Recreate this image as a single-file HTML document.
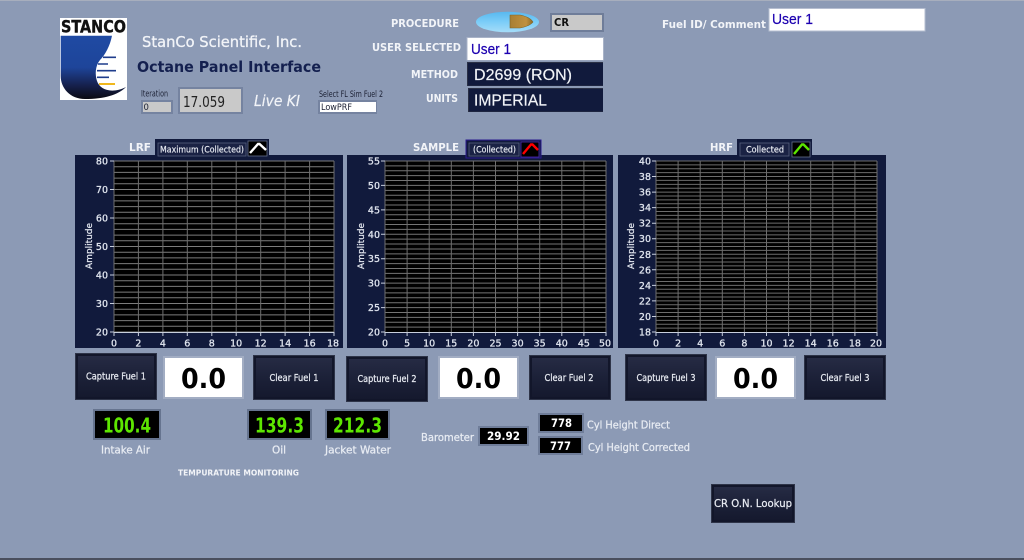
<!DOCTYPE html>
<html><head><meta charset="utf-8"><style>
html,body{margin:0;padding:0;width:1024px;height:560px;overflow:hidden;background:#8c9ab5}
svg{display:block;position:absolute;left:0;top:0}
text{font-family:"Liberation Sans",sans-serif}
.d{font-family:"DejaVu Sans",sans-serif}
.lb{font-family:"DejaVu Sans",sans-serif;font-weight:bold;font-size:10.5px;fill:#f2f4f8}
.t{font-family:"DejaVu Sans",sans-serif;font-size:10.5px;fill:#e8ecf3;stroke:#e8ecf3;stroke-width:.25}
.ax{font-family:"DejaVu Sans",sans-serif;font-size:9.5px;fill:#dfe4ee;stroke:#dfe4ee;stroke-width:.3}
.am{font-family:"DejaVu Sans",sans-serif;font-size:9px;fill:#e6eaf2;stroke:#e6eaf2;stroke-width:.2}
.btn{font-family:"DejaVu Sans",sans-serif;font-size:9.5px;fill:#e8ebf2;stroke:#e8ebf2;stroke-width:.25;text-anchor:middle}
.leg{font-family:"DejaVu Sans",sans-serif;font-size:9px;fill:#e8ebf2;stroke:#e8ebf2;stroke-width:.2}
.big{font-family:"DejaVu Sans",sans-serif;font-weight:bold;font-size:28px;fill:#000;text-anchor:middle}
.grn{font-family:"DejaVu Sans",sans-serif;font-weight:bold;font-size:20px;fill:#5de600}
.wh{font-family:"DejaVu Sans",sans-serif;font-weight:bold;font-size:11.5px;fill:#fff}
.usr{font-size:14.5px;fill:#1c00b0;stroke:#1c00b0;stroke-width:.2}
.drk{font-size:16px;fill:#f2f4f8;stroke:#f2f4f8;stroke-width:.2}
.sm{font-family:"DejaVu Sans",sans-serif;font-size:8.5px;fill:#1b2033}
</style></head><body>
<svg width="1024" height="560" viewBox="0 0 1024 560" xmlns="http://www.w3.org/2000/svg">
<defs>
<linearGradient id="bg" x1="0" y1="0" x2="0" y2="1"><stop offset="0" stop-color="#262b44"/><stop offset=".5" stop-color="#1c2138"/><stop offset="1" stop-color="#15192e"/></linearGradient>
<linearGradient id="lg" x1="0" y1="0" x2="0" y2="1"><stop offset="0" stop-color="#1f4aa3"/><stop offset=".5" stop-color="#1e459a"/><stop offset=".78" stop-color="#16214e"/><stop offset="1" stop-color="#0a0a12"/></linearGradient>
<linearGradient id="tg" x1="0" y1="0" x2="0" y2="1"><stop offset="0" stop-color="#58b8ef"/><stop offset=".5" stop-color="#7ccdf8"/><stop offset="1" stop-color="#a5dcf8"/></linearGradient>
<linearGradient id="bl" x1="0" y1="0" x2="1" y2="0"><stop offset="0" stop-color="#a87f32"/><stop offset=".7" stop-color="#c0913e"/><stop offset="1" stop-color="#8c6a28"/></linearGradient>
</defs>
<rect width="1024" height="560" fill="#8c9ab5"/>
<rect width="1024" height="1" fill="#a7aebd"/>
<rect y="558" width="1024" height="2" fill="#4a4f5e"/>

<!-- logo -->
<rect x="60" y="18" width="67" height="82" fill="#fff"/>
<text x="61" y="32.500" textLength="65" lengthAdjust="spacingAndGlyphs" style="font-weight:bold;font-size:16.5px;font-family:'DejaVu Sans',sans-serif;stroke:#111;stroke-width:.4" fill="#111">STANCO</text>
<path d="M60.700 35.700H112C110 46 105 55 100 60C95 66 95 75 97 81C100 90 112 94 126 87C118 95 104 99 85 99C70 99 60.700 88 60.700 76Z" fill="url(#lg)"/>
<path d="M103 57.300H116M98 64H108M97 70.700H116M97 77.300H109" stroke="#1f3d8c" stroke-width="1.6"/>
<path d="M99 84H115" stroke="#f0b81e" stroke-width="2"/>

<text x="142" y="47" textLength="160" lengthAdjust="spacingAndGlyphs" style="font-size:15px;stroke:#f2f4f8;stroke-width:.3" class="d" fill="#f2f4f8">StanCo Scientific, Inc.</text>
<text x="137" y="72" textLength="184" lengthAdjust="spacingAndGlyphs" style="font-size:15px;font-weight:bold" class="d" fill="#14204f">Octane Panel Interface</text>

<text x="141" y="96.500" textLength="27" lengthAdjust="spacingAndGlyphs" class="sm">Iteration</text>
<rect x="141" y="100" width="32" height="14" fill="#7583a0"/><rect x="143" y="102" width="28" height="10" fill="#c9c9c9"/>
<text x="143.500" y="110" class="sm" fill="#333">0</text>
<rect x="178" y="87" width="65" height="27" fill="#7583a0"/><rect x="180" y="89" width="61" height="23" fill="#c9c9c9"/>
<text x="183" y="107" textLength="42" lengthAdjust="spacingAndGlyphs" style="font-size:15px" class="d" fill="#222">17.059</text>
<text x="254" y="106" textLength="46" lengthAdjust="spacingAndGlyphs" style="font-size:15px;font-style:italic;stroke:#f2f4f8;stroke-width:.2" class="d" fill="#f2f4f8">Live KI</text>
<text x="319" y="97" textLength="64" lengthAdjust="spacingAndGlyphs" class="sm">Select FL Sim Fuel 2</text>
<rect x="318" y="100" width="59" height="14" fill="#7583a0"/><rect x="320" y="102" width="56" height="10" fill="#fff"/>
<text x="321" y="110" textLength="31" lengthAdjust="spacingAndGlyphs" class="sm" fill="#222">LowPRF</text>

<!-- procedure -->
<text x="391" y="27" textLength="68" lengthAdjust="spacingAndGlyphs" class="lb">PROCEDURE</text>
<ellipse cx="507.500" cy="22" rx="31.500" ry="10.300" fill="url(#tg)"/>
<path d="M510 15H520Q530 17 533 22Q530 26 520 28H510Z" fill="url(#bl)" stroke="#7d6428" stroke-width=".6"/>
<rect x="550" y="13" width="54" height="19" fill="#6f7d99"/><rect x="552" y="15" width="50" height="15" fill="#c9c9c9"/>
<text x="554" y="26" textLength="15" lengthAdjust="spacingAndGlyphs" class="d" style="font-weight:bold;font-size:10.5px" fill="#111">CR</text>

<text x="372" y="51" textLength="89" lengthAdjust="spacingAndGlyphs" class="lb">USER SELECTED</text>
<rect x="466.500" y="37" width="137.500" height="23.500" fill="#a9b3c8"/><rect x="467.500" y="38" width="135.500" height="22" fill="#fff"/>
<text x="471" y="54" textLength="40" lengthAdjust="spacingAndGlyphs" class="usr">User 1</text>

<text x="411" y="78" textLength="47" lengthAdjust="spacingAndGlyphs" class="lb">METHOD</text>
<rect x="467" y="62" width="136" height="24" fill="#2a3045"/><rect x="468" y="63" width="135" height="22.500" fill="#111a3c"/>
<text x="474" y="80" textLength="98" lengthAdjust="spacingAndGlyphs" class="drk">D2699 (RON)</text>

<text x="426" y="102" textLength="32" lengthAdjust="spacingAndGlyphs" class="lb">UNITS</text>
<rect x="468" y="88" width="135" height="24" fill="#2a3045"/><rect x="469" y="89" width="134" height="22.500" fill="#111a3c"/>
<text x="474" y="105.500" textLength="73" lengthAdjust="spacingAndGlyphs" class="drk">IMPERIAL</text>

<text x="662" y="28" textLength="104" lengthAdjust="spacingAndGlyphs" class="lb">Fuel ID/ Comment</text>
<rect x="768.500" y="8" width="157" height="23.500" fill="#b5bdd0"/><rect x="769.500" y="9" width="155" height="21.500" fill="#fff"/>
<text x="772" y="24" textLength="41" lengthAdjust="spacingAndGlyphs" class="usr">User 1</text>

<!-- chart 1 -->
<rect x="75" y="155" width="268" height="193" fill="#111a3c"/>
<rect x="114" y="161" width="220" height="171" fill="#000"/>
<path fill="none" stroke="#7c7c7c" stroke-width="1" d="M114 161h220m-220 5.7h220m-220 5.7h220m-220 5.7h220m-220 5.7h220m-220 5.7h220m-220 5.7h220m-220 5.7h220m-220 5.7h220m-220 5.7h220m-220 5.7h220m-220 5.7h220m-220 5.7h220m-220 5.7h220m-220 5.7h220m-220 5.7h220m-220 5.7h220m-220 5.7h220m-220 5.7h220m-220 5.7h220m-220 5.7h220m-220 5.7h220m-220 5.7h220m-220 5.7h220m-220 5.7h220m-220 5.7h220m-220 5.7h220m-220 5.7h220m-220 5.7h220m-220 5.7h220m-220 5.7h220"/>
<path fill="none" stroke="#6e6e6e" stroke-width="1" d="M114 161v171M138.400 161v171M162.900 161v171M187.300 161v171M211.800 161v171M236.200 161v171M260.700 161v171M285.100 161v171M309.600 161v171M334 161v171"/>
<path fill="none" stroke="#c8cfdd" stroke-width="1" d="M114 332.500H334M110 161H114M110 189.500H114M110 218H114M110 246.500H114M110 275H114M110 303.500H114M110 332H114M114 332v4M138.400 332v4M162.900 332v4M187.300 332v4M211.800 332v4M236.200 332v4M260.700 332v4M285.100 332v4M309.600 332v4M334 332v4"/>
<g text-anchor="end"><text x="108" y="164.500" class="ax">80</text><text x="108" y="193" class="ax">70</text><text x="108" y="221.500" class="ax">60</text><text x="108" y="250" class="ax">50</text><text x="108" y="278.500" class="ax">40</text><text x="108" y="307" class="ax">30</text><text x="108" y="335.500" class="ax">20</text></g>
<g text-anchor="middle"><text x="114" y="346.500" class="ax">0</text><text x="138.400" y="346.500" class="ax">2</text><text x="162.900" y="346.500" class="ax">4</text><text x="187.300" y="346.500" class="ax">6</text><text x="211.800" y="346.500" class="ax">8</text><text x="236.200" y="346.500" class="ax">10</text><text x="260.700" y="346.500" class="ax">12</text><text x="285.100" y="346.500" class="ax">14</text><text x="309.600" y="346.500" class="ax">16</text><text x="333" y="346.500" class="ax">18</text></g>
<text transform="translate(92 246) rotate(-90)" text-anchor="middle" class="am">Amplitude</text>
<text x="129" y="151" textLength="22" lengthAdjust="spacingAndGlyphs" class="lb">LRF</text>
<rect x="155" y="139" width="114" height="18" fill="#111a3c"/>
<rect x="158" y="143" width="88" height="13" fill="#1a2244" stroke="#55607e" stroke-width=".8"/>
<text x="160" y="152.500" textLength="84" lengthAdjust="spacingAndGlyphs" class="leg">Maximum (Collected)</text>
<rect x="248" y="141" width="19" height="15" fill="#000" stroke="#66708a" stroke-width=".8"/>
<path d="M250 153L258 144H259.500L266 150" fill="none" stroke="#fff" stroke-width="2.400"/>

<!-- chart 2 -->
<rect x="347" y="155" width="266" height="193" fill="#111a3c"/>
<rect x="385" y="161" width="221" height="171" fill="#000"/>
<path fill="none" stroke="#747474" stroke-width="1" d="M385 161h221m-221 4.886h221m-221 4.886h221m-221 4.886h221m-221 4.886h221m-221 4.886h221m-221 4.886h221m-221 4.886h221m-221 4.886h221m-221 4.886h221m-221 4.886h221m-221 4.886h221m-221 4.886h221m-221 4.886h221m-221 4.886h221m-221 4.886h221m-221 4.886h221m-221 4.886h221m-221 4.886h221m-221 4.886h221m-221 4.886h221m-221 4.886h221m-221 4.886h221m-221 4.886h221m-221 4.886h221m-221 4.886h221m-221 4.886h221m-221 4.886h221m-221 4.886h221m-221 4.886h221m-221 4.886h221m-221 4.886h221m-221 4.886h221m-221 4.886h221m-221 4.886h221"/>
<path fill="none" stroke="#6e6e6e" stroke-width="1" d="M385 161v171M407.100 161v171M429.200 161v171M451.300 161v171M473.400 161v171M495.500 161v171M517.600 161v171M539.700 161v171M561.800 161v171M583.900 161v171M606 161v171"/>
<path fill="none" stroke="#c8cfdd" stroke-width="1" d="M385 332.500H606M381 161H385M381 185.400H385M381 209.900H385M381 234.300H385M381 258.700H385M381 283.100H385M381 307.600H385M381 332H385M385 332v4M407.100 332v4M429.200 332v4M451.300 332v4M473.400 332v4M495.500 332v4M517.600 332v4M539.700 332v4M561.800 332v4M583.900 332v4M606 332v4"/>
<g text-anchor="end"><text x="380" y="164.500" class="ax">55</text><text x="380" y="189" class="ax">50</text><text x="380" y="213.400" class="ax">45</text><text x="380" y="237.800" class="ax">40</text><text x="380" y="262.200" class="ax">35</text><text x="380" y="286.600" class="ax">30</text><text x="380" y="311.100" class="ax">25</text><text x="380" y="335.500" class="ax">20</text></g>
<g text-anchor="middle"><text x="385" y="346.500" class="ax">0</text><text x="407.100" y="346.500" class="ax">5</text><text x="429.200" y="346.500" class="ax">10</text><text x="451.300" y="346.500" class="ax">15</text><text x="473.400" y="346.500" class="ax">20</text><text x="495.500" y="346.500" class="ax">25</text><text x="517.600" y="346.500" class="ax">30</text><text x="539.700" y="346.500" class="ax">35</text><text x="561.800" y="346.500" class="ax">40</text><text x="583.900" y="346.500" class="ax">45</text><text x="605" y="346.500" class="ax">50</text></g>
<text transform="translate(364 246) rotate(-90)" text-anchor="middle" class="am">Amplitude</text>
<text x="413" y="151" textLength="46" lengthAdjust="spacingAndGlyphs" class="lb">SAMPLE</text>
<rect x="466" y="140" width="75" height="18" fill="#111a3c" stroke="#2a1a90" stroke-width="1"/>
<rect x="469" y="143" width="50" height="13" fill="#1a2244" stroke="#55607e" stroke-width=".8"/>
<text x="473" y="152.500" textLength="43" lengthAdjust="spacingAndGlyphs" class="leg">(Collected)</text>
<rect x="521" y="142" width="18" height="15" fill="#000" stroke="#4a2ab0" stroke-width=".8"/>
<path d="M523 154L531 144.500H532.500L538 150" fill="none" stroke="#f00" stroke-width="2.400"/>

<!-- chart 3 -->
<rect x="618" y="155" width="268" height="193" fill="#111a3c"/>
<rect x="656" y="161" width="221" height="171" fill="#000"/>
<path fill="none" stroke="#6c6c6c" stroke-width="1" d="M656 161h221m-221 3.886h221m-221 3.886h221m-221 3.886h221m-221 3.886h221m-221 3.886h221m-221 3.886h221m-221 3.886h221m-221 3.886h221m-221 3.886h221m-221 3.886h221m-221 3.886h221m-221 3.886h221m-221 3.886h221m-221 3.886h221m-221 3.886h221m-221 3.886h221m-221 3.886h221m-221 3.886h221m-221 3.886h221m-221 3.886h221m-221 3.886h221m-221 3.886h221m-221 3.886h221m-221 3.886h221m-221 3.886h221m-221 3.886h221m-221 3.886h221m-221 3.886h221m-221 3.886h221m-221 3.886h221m-221 3.886h221m-221 3.886h221m-221 3.886h221m-221 3.886h221m-221 3.886h221m-221 3.886h221m-221 3.886h221m-221 3.886h221m-221 3.886h221m-221 3.886h221m-221 3.886h221m-221 3.886h221m-221 3.886h221"/>
<path fill="none" stroke="#6e6e6e" stroke-width="1" d="M656 161v171M678.100 161v171M700.200 161v171M722.300 161v171M744.400 161v171M766.500 161v171M788.600 161v171M810.700 161v171M832.800 161v171M854.900 161v171M877 161v171"/>
<path fill="none" stroke="#c8cfdd" stroke-width="1" d="M656 332.500H877M652 161H656M652 176.500H656M652 192.100H656M652 207.600H656M652 223.200H656M652 238.700H656M652 254.300H656M652 269.800H656M652 285.400H656M652 300.900H656M652 316.500H656M652 332H656M656 332v4M678.100 332v4M700.200 332v4M722.300 332v4M744.400 332v4M766.500 332v4M788.600 332v4M810.700 332v4M832.800 332v4M854.900 332v4M877 332v4"/>
<g text-anchor="end"><text x="651" y="164.500" class="ax">40</text><text x="651" y="180" class="ax">38</text><text x="651" y="195.600" class="ax">36</text><text x="651" y="211.100" class="ax">34</text><text x="651" y="226.700" class="ax">32</text><text x="651" y="242.200" class="ax">30</text><text x="651" y="257.800" class="ax">28</text><text x="651" y="273.300" class="ax">26</text><text x="651" y="288.900" class="ax">24</text><text x="651" y="304.400" class="ax">22</text><text x="651" y="320" class="ax">20</text><text x="651" y="335.500" class="ax">18</text></g>
<g text-anchor="middle"><text x="656" y="346.500" class="ax">0</text><text x="678.100" y="346.500" class="ax">2</text><text x="700.200" y="346.500" class="ax">4</text><text x="722.300" y="346.500" class="ax">6</text><text x="744.400" y="346.500" class="ax">8</text><text x="766.500" y="346.500" class="ax">10</text><text x="788.600" y="346.500" class="ax">12</text><text x="810.700" y="346.500" class="ax">14</text><text x="832.800" y="346.500" class="ax">16</text><text x="854.900" y="346.500" class="ax">18</text><text x="876" y="346.500" class="ax">20</text></g>
<text transform="translate(634 246) rotate(-90)" text-anchor="middle" class="am">Amplitude</text>
<text x="710" y="151" textLength="23" lengthAdjust="spacingAndGlyphs" class="lb">HRF</text>
<rect x="737" y="139" width="75" height="18" fill="#111a3c"/>
<rect x="740" y="143" width="49" height="13" fill="#1a2244" stroke="#55607e" stroke-width=".8"/>
<text x="746" y="152.500" textLength="38" lengthAdjust="spacingAndGlyphs" class="leg">Collected</text>
<rect x="792" y="142" width="18" height="15" fill="#000" stroke="#66708a" stroke-width=".8"/>
<path d="M794 154L802 144.500H803.500L809 150" fill="none" stroke="#5de600" stroke-width="2.400"/>

<!-- buttons -->
<rect x="75" y="353" width="82" height="47" fill="#2e3448"/><rect x="76" y="354" width="80" height="45" fill="#12162a"/><rect x="78" y="356" width="76" height="41" fill="url(#bg)"/>
<text x="116" y="379.500" class="btn" textLength="60" lengthAdjust="spacingAndGlyphs">Capture Fuel 1</text>
<rect x="253" y="355" width="82" height="45" fill="#2e3448"/><rect x="254" y="356" width="80" height="43" fill="#12162a"/><rect x="256" y="358" width="76" height="39" fill="url(#bg)"/>
<text x="294" y="381" class="btn" textLength="49" lengthAdjust="spacingAndGlyphs">Clear Fuel 1</text>
<rect x="346" y="356" width="82" height="46" fill="#2e3448"/><rect x="347" y="357" width="80" height="44" fill="#12162a"/><rect x="349" y="359" width="76" height="40" fill="url(#bg)"/>
<text x="387" y="382" class="btn" textLength="59" lengthAdjust="spacingAndGlyphs">Capture Fuel 2</text>
<rect x="529" y="355" width="82" height="45" fill="#2e3448"/><rect x="530" y="356" width="80" height="43" fill="#12162a"/><rect x="532" y="358" width="76" height="39" fill="url(#bg)"/>
<text x="569" y="381" class="btn" textLength="49" lengthAdjust="spacingAndGlyphs">Clear Fuel 2</text>
<rect x="625" y="354" width="82" height="47" fill="#2e3448"/><rect x="626" y="355" width="80" height="45" fill="#12162a"/><rect x="628" y="357" width="76" height="41" fill="url(#bg)"/>
<text x="666" y="381" class="btn" textLength="59" lengthAdjust="spacingAndGlyphs">Capture Fuel 3</text>
<rect x="804" y="355" width="82" height="45" fill="#2e3448"/><rect x="805" y="356" width="80" height="43" fill="#12162a"/><rect x="807" y="358" width="76" height="39" fill="url(#bg)"/>
<text x="845" y="381" class="btn" textLength="49" lengthAdjust="spacingAndGlyphs">Clear Fuel 3</text>
<rect x="711" y="484" width="84" height="39" fill="#2e3448"/><rect x="712" y="485" width="82" height="37" fill="#12162a"/><rect x="714" y="487" width="78" height="33" fill="url(#bg)"/>
<text x="753" y="507" class="btn" style="font-size:11px" textLength="78" lengthAdjust="spacingAndGlyphs">CR O.N. Lookup</text>

<!-- big displays -->
<rect x="163" y="356" width="81" height="43" fill="#a2adc3"/><rect x="165" y="358" width="77" height="39" fill="#fff"/>
<text x="203.500" y="388" class="big" textLength="45" lengthAdjust="spacingAndGlyphs">0.0</text>
<rect x="438" y="356" width="81" height="43" fill="#a2adc3"/><rect x="440" y="358" width="77" height="39" fill="#fff"/>
<text x="478.500" y="388" class="big" textLength="45" lengthAdjust="spacingAndGlyphs">0.0</text>
<rect x="715" y="356" width="81" height="43" fill="#a2adc3"/><rect x="717" y="358" width="77" height="39" fill="#fff"/>
<text x="755.500" y="388" class="big" textLength="45" lengthAdjust="spacingAndGlyphs">0.0</text>

<!-- temps -->
<rect x="93" y="409" width="68" height="31" fill="#66748f"/><rect x="95" y="411" width="64" height="27" fill="#000"/>
<text x="103" y="432.500" class="grn" textLength="48" lengthAdjust="spacingAndGlyphs">100.4</text>
<rect x="247" y="409" width="65" height="31" fill="#66748f"/><rect x="249" y="411" width="61" height="27" fill="#000"/>
<text x="255" y="432.500" class="grn" textLength="49" lengthAdjust="spacingAndGlyphs">139.3</text>
<rect x="325" y="409" width="65" height="31" fill="#66748f"/><rect x="327" y="411" width="61" height="27" fill="#000"/>
<text x="333" y="432.500" class="grn" textLength="49" lengthAdjust="spacingAndGlyphs">212.3</text>
<text x="101" y="453.500" class="t" textLength="49" lengthAdjust="spacingAndGlyphs">Intake Air</text>
<text x="272" y="453.500" class="t" textLength="14" lengthAdjust="spacingAndGlyphs">Oil</text>
<text x="325" y="453.500" class="t" textLength="66" lengthAdjust="spacingAndGlyphs">Jacket Water</text>
<text x="178" y="475.500" class="lb" style="font-size:8px" textLength="121" lengthAdjust="spacingAndGlyphs">TEMPURATURE MONITORING</text>

<!-- barometer -->
<text x="421" y="441" class="t" textLength="53" lengthAdjust="spacingAndGlyphs">Barometer</text>
<rect x="478" y="426" width="51" height="20" fill="#6f7d99"/><rect x="480" y="428" width="47" height="16" fill="#000"/>
<text x="487" y="440" class="wh" textLength="33" lengthAdjust="spacingAndGlyphs">29.92</text>
<rect x="538" y="413" width="46" height="20" fill="#6f7d99"/><rect x="540" y="415" width="42" height="16" fill="#000"/>
<text x="551" y="427" class="wh" textLength="21" lengthAdjust="spacingAndGlyphs">778</text>
<rect x="538" y="436" width="45" height="19" fill="#6f7d99"/><rect x="540" y="438" width="41" height="15" fill="#000"/>
<text x="550" y="450" class="wh" textLength="21" lengthAdjust="spacingAndGlyphs">777</text>
<text x="587" y="428.500" class="t" textLength="83" lengthAdjust="spacingAndGlyphs">Cyl Height Direct</text>
<text x="588" y="451" class="t" textLength="102" lengthAdjust="spacingAndGlyphs">Cyl Height Corrected</text>
</svg>
</body></html>
